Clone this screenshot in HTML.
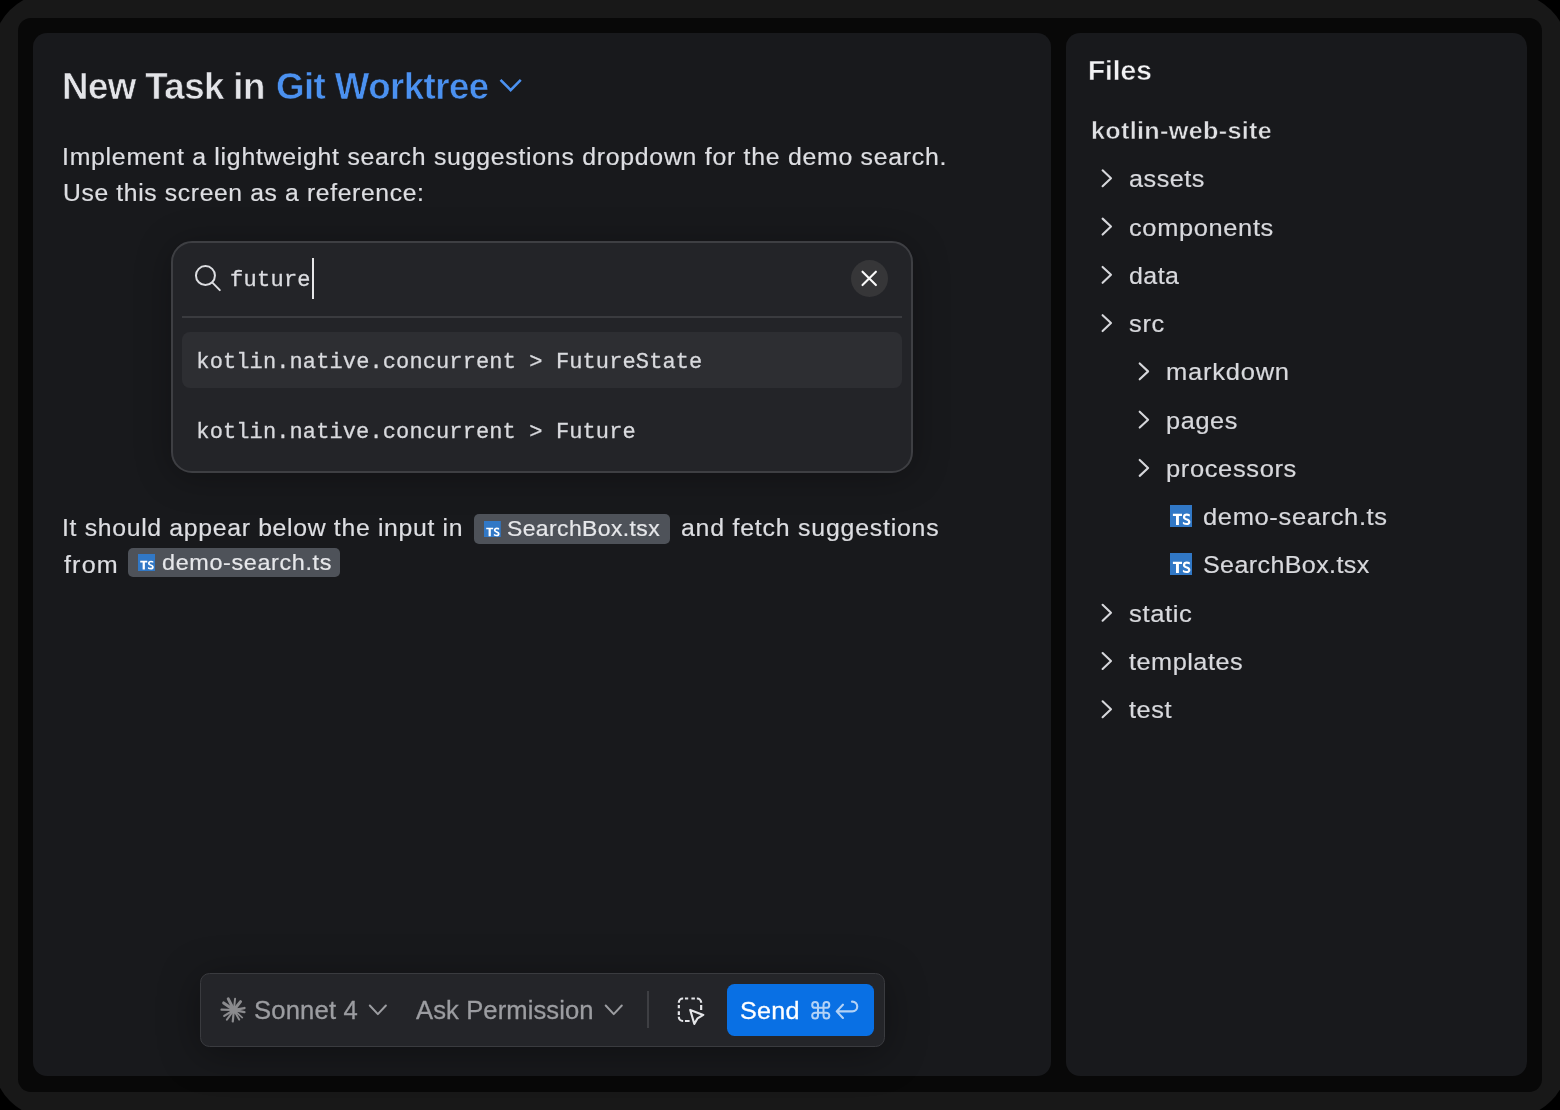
<!DOCTYPE html>
<html><head><meta charset="utf-8"><title>New Task</title>
<style>
html,body{margin:0;padding:0;background:#000;}
html{overflow:hidden;}
body{width:1560px;height:1110px;overflow:hidden;font-family:"Liberation Sans",sans-serif;}
#root{position:relative;width:1560px;height:1110px;overflow:hidden;background:#000;}
.a{position:absolute;display:block;}
#txt{position:absolute;left:0;top:0;width:1560px;height:1110px;will-change:transform;}
.t{position:absolute;display:block;white-space:pre;transform-origin:0 50%;}
.sans{font-family:"Liberation Sans",sans-serif;}
.mono{font-family:"Liberation Mono",monospace;}
#frame{left:-7.5px;top:-7.5px;width:1575px;height:1125px;background:#181818;border-radius:58px;}
#inner{left:17.8px;top:17.8px;width:1524.2px;height:1074px;background:#080808;border-radius:13px;}
#left{left:33.2px;top:32.9px;width:1017.9px;height:1043.4px;background:#18191c;border-radius:14px;}
#right{left:1065.9px;top:32.9px;width:460.8px;height:1043.4px;background:#18191c;border-radius:14px;}
#sbox{left:170.9px;top:240.9px;width:742.6px;height:231.8px;box-sizing:border-box;background:#232428;border:2px solid #3e3f43;border-radius:21px;box-shadow:0 4px 36px rgba(0,0,0,.3);}
#sdiv{left:181.8px;top:315.5px;width:720.6px;height:2px;background:#3a3b3f;}
#shl{left:182.2px;top:332px;width:720.2px;height:55.7px;background:#2d2e32;border-radius:8px;}
#cursor{left:312px;top:258px;width:2px;height:41px;background:#e6e6e8;}
#close{left:850.5px;top:259.7px;width:37.3px;height:37.3px;border-radius:50%;background:#363638;}
.chip{background:#4e5259;border-radius:5px;}
#tb{left:199.6px;top:972.5px;width:685.4px;height:74px;box-sizing:border-box;background:#242529;border:1.2px solid #3a3b3f;border-radius:9.5px;box-shadow:0 6px 40px rgba(0,0,0,.36);}
#tsep{left:647.3px;top:991px;width:1.5px;height:37px;background:#3e3f43;}
#send{left:727px;top:983.7px;width:147px;height:52.2px;background:#0970e4;border-radius:7.5px;}
</style></head><body><div id="root">
<div class="a" id="frame"></div>
<div class="a" id="inner"></div>
<div class="a" id="left"></div>
<div class="a" id="right"></div>
<div class="a" id="sbox"></div>
<div class="a" id="sdiv"></div>
<div class="a" id="shl"></div>
<div class="a" id="cursor"></div>
<div class="a" id="close"></div>
<div class="a chip" style="left:473.7px;top:513.8px;width:196.5px;height:30px"></div>
<div class="a chip" style="left:128.2px;top:547.7px;width:211.4px;height:29.2px"></div>
<div class="a" id="tb"></div>
<div class="a" id="tsep"></div>
<div class="a" id="send"></div>
<svg class="a" style="left:496px;top:75px" width="30" height="20" viewBox="496 75 30 20"><path d="M500.52 79.82 L510.65 90.06 L520.78 79.82" fill="none" stroke="#4b91f0" stroke-width="2.6" stroke-linecap="butt" stroke-linejoin="miter"/></svg>
<svg class="a" style="left:365px;top:1001px" width="26" height="18" viewBox="365 1001 26 18"><path d="M369.80 1005.50 L377.85 1014.10 L385.90 1005.50" fill="none" stroke="#9c9da1" stroke-width="2.0" stroke-linecap="round" stroke-linejoin="round"/></svg>
<svg class="a" style="left:601px;top:1001px" width="26" height="18" viewBox="601 1001 26 18"><path d="M605.70 1005.50 L613.75 1014.10 L621.80 1005.50" fill="none" stroke="#9c9da1" stroke-width="2.0" stroke-linecap="round" stroke-linejoin="round"/></svg>
<svg class="a" style="left:190px;top:261px" width="36" height="36" viewBox="190 261 36 36"><circle cx="205.45" cy="275.6" r="9.5" fill="none" stroke="#dcdde1" stroke-width="2"/><path d="M212.4 282.6 L219.8 290.1" stroke="#dcdde1" stroke-width="2" stroke-linecap="round"/></svg>
<svg class="a" style="left:850px;top:259px" width="38" height="38" viewBox="850 259 38 38"><path d="M862.5 271.65 L875.9 285.05 M875.9 271.65 L862.5 285.05" stroke="#fafafa" stroke-width="2.1" stroke-linecap="round"/></svg>
<svg class="a" style="left:484.00px;top:520.60px" width="16.80" height="16.80" viewBox="0 0 22 22"><rect width="22" height="22" fill="#3178c6"/><path d="M2.9 8.8 H12.0 V10.9 H8.9 V19.9 H6.0 V10.9 H2.9 Z" fill="#fff"/><path transform="translate(12.9 8.6) scale(0.987 1.106) translate(-11.9 -9.3)" d="M18.9 11.9 C18.0 11.4 17.0 11.2 16.0 11.2 C14.9 11.2 14.2 11.6 14.2 12.3 C14.2 13.0 14.9 13.3 16.2 13.8 C18.2 14.5 19.5 15.2 19.5 16.9 C19.5 18.7 18.0 19.7 15.7 19.7 C14.3 19.7 13.0 19.4 11.9 18.8 V16.6 C13.0 17.3 14.3 17.7 15.5 17.7 C16.6 17.7 17.2 17.4 17.2 16.8 C17.2 16.1 16.5 15.8 15.1 15.3 C13.0 14.6 11.9 13.9 11.9 12.3 C11.9 10.4 13.5 9.3 15.9 9.3 C17.0 9.3 18.0 9.5 18.9 9.9 Z" fill="#fff"/></svg>
<svg class="a" style="left:138.10px;top:553.90px" width="17.00" height="17.00" viewBox="0 0 22 22"><rect width="22" height="22" fill="#3178c6"/><path d="M2.9 8.8 H12.0 V10.9 H8.9 V19.9 H6.0 V10.9 H2.9 Z" fill="#fff"/><path transform="translate(12.9 8.6) scale(0.987 1.106) translate(-11.9 -9.3)" d="M18.9 11.9 C18.0 11.4 17.0 11.2 16.0 11.2 C14.9 11.2 14.2 11.6 14.2 12.3 C14.2 13.0 14.9 13.3 16.2 13.8 C18.2 14.5 19.5 15.2 19.5 16.9 C19.5 18.7 18.0 19.7 15.7 19.7 C14.3 19.7 13.0 19.4 11.9 18.8 V16.6 C13.0 17.3 14.3 17.7 15.5 17.7 C16.6 17.7 17.2 17.4 17.2 16.8 C17.2 16.1 16.5 15.8 15.1 15.3 C13.0 14.6 11.9 13.9 11.9 12.3 C11.9 10.4 13.5 9.3 15.9 9.3 C17.0 9.3 18.0 9.5 18.9 9.9 Z" fill="#fff"/></svg>
<svg class="a" style="left:1170.00px;top:505.04px" width="22.00" height="22.00" viewBox="0 0 22 22"><rect width="22" height="22" fill="#3178c6"/><path d="M2.9 8.8 H12.0 V10.9 H8.9 V19.9 H6.0 V10.9 H2.9 Z" fill="#fff"/><path transform="translate(12.9 8.6) scale(0.987 1.106) translate(-11.9 -9.3)" d="M18.9 11.9 C18.0 11.4 17.0 11.2 16.0 11.2 C14.9 11.2 14.2 11.6 14.2 12.3 C14.2 13.0 14.9 13.3 16.2 13.8 C18.2 14.5 19.5 15.2 19.5 16.9 C19.5 18.7 18.0 19.7 15.7 19.7 C14.3 19.7 13.0 19.4 11.9 18.8 V16.6 C13.0 17.3 14.3 17.7 15.5 17.7 C16.6 17.7 17.2 17.4 17.2 16.8 C17.2 16.1 16.5 15.8 15.1 15.3 C13.0 14.6 11.9 13.9 11.9 12.3 C11.9 10.4 13.5 9.3 15.9 9.3 C17.0 9.3 18.0 9.5 18.9 9.9 Z" fill="#fff"/></svg>
<svg class="a" style="left:1170.00px;top:553.31px" width="22.00" height="22.00" viewBox="0 0 22 22"><rect width="22" height="22" fill="#3178c6"/><path d="M2.9 8.8 H12.0 V10.9 H8.9 V19.9 H6.0 V10.9 H2.9 Z" fill="#fff"/><path transform="translate(12.9 8.6) scale(0.987 1.106) translate(-11.9 -9.3)" d="M18.9 11.9 C18.0 11.4 17.0 11.2 16.0 11.2 C14.9 11.2 14.2 11.6 14.2 12.3 C14.2 13.0 14.9 13.3 16.2 13.8 C18.2 14.5 19.5 15.2 19.5 16.9 C19.5 18.7 18.0 19.7 15.7 19.7 C14.3 19.7 13.0 19.4 11.9 18.8 V16.6 C13.0 17.3 14.3 17.7 15.5 17.7 C16.6 17.7 17.2 17.4 17.2 16.8 C17.2 16.1 16.5 15.8 15.1 15.3 C13.0 14.6 11.9 13.9 11.9 12.3 C11.9 10.4 13.5 9.3 15.9 9.3 C17.0 9.3 18.0 9.5 18.9 9.9 Z" fill="#fff"/></svg>
<svg class="a" style="left:215px;top:992px" width="38" height="36" viewBox="215 992 38 36"><path d="M233.9 1010.0 L228.27 998.91" stroke="#8b8b8e" stroke-width="3.0" stroke-linecap="round"/><path d="M233.9 1010.0 L235.06 998.74" stroke="#8b8b8e" stroke-width="2.0" stroke-linecap="round"/><path d="M233.9 1010.0 L240.54 1001.63" stroke="#8b8b8e" stroke-width="3.0" stroke-linecap="round"/><path d="M233.9 1010.0 L244.43 1008.06" stroke="#8b8b8e" stroke-width="2.4" stroke-linecap="round"/><path d="M233.9 1010.0 L244.43 1012.10" stroke="#8b8b8e" stroke-width="2.4" stroke-linecap="round"/><path d="M233.9 1010.0 L242.28 1017.54" stroke="#8b8b8e" stroke-width="1.7" stroke-linecap="round"/><path d="M233.9 1010.0 L239.19 1019.57" stroke="#8b8b8e" stroke-width="2.0" stroke-linecap="round"/><path d="M233.9 1010.0 L232.75 1021.52" stroke="#8b8b8e" stroke-width="2.2" stroke-linecap="round"/><path d="M233.9 1010.0 L226.92 1019.64" stroke="#8b8b8e" stroke-width="2.0" stroke-linecap="round"/><path d="M233.9 1010.0 L224.21 1015.92" stroke="#8b8b8e" stroke-width="2.2" stroke-linecap="round"/><path d="M233.9 1010.0 L221.49 1009.67" stroke="#8b8b8e" stroke-width="2.2" stroke-linecap="round"/><path d="M233.9 1010.0 L223.67 1002.92" stroke="#8b8b8e" stroke-width="3.0" stroke-linecap="round"/><circle cx="233.9" cy="1010.0" r="3.7" fill="#8b8b8e"/></svg>
<svg class="a" style="left:674px;top:994px" width="36" height="36" viewBox="674 994 36 36"><path d="M678.85 1002.8 V1002.5 A4.0 4.0 0 0 1 682.85 998.5 H683.15 M696.85 998.5 H697.15 A4.0 4.0 0 0 1 701.15 1002.5 V1002.8 M678.85 1016.7 V1017.0 A4.0 4.0 0 0 0 682.85 1021.0 H683.15 M684.95 998.5 H688.2 M691.4 998.5 H694.9 M678.85 1005.1 V1008.2 M678.85 1011.3 V1014.9 M701.15 1005.1 V1010.0 M684.95 1021 H689.6" fill="none" stroke="#e4e5e8" stroke-width="2.2"/><path d="M690.2 1009.9 L703.3 1014.9 L697.6 1018.3 L694.3 1023.9 Z" fill="none" stroke="#e4e5e8" stroke-width="2.1" stroke-linejoin="round"/></svg>
<svg class="a" style="left:808px;top:997px" width="26" height="26" viewBox="808 997 26 26"><path d="M818.0 1007.8 H823.5 V1012.7 H818.0 Z M818.0 1007.8 H815.1 A2.9 2.9 0 1 1 818.0 1004.9 Z M823.5 1007.8 V1004.9 A2.9 2.9 0 1 1 826.4 1007.8 Z M823.5 1012.7 H826.4 A2.9 2.9 0 1 1 823.5 1015.6 Z M818.0 1012.7 V1015.6 A2.9 2.9 0 1 1 815.1 1012.7 Z" fill="none" stroke="#b3d2f6" stroke-width="2.0" stroke-linejoin="round"/></svg>
<svg class="a" style="left:832px;top:996px" width="30" height="28" viewBox="832 996 30 28"><path d="M837.0 1011.35 H852.4 A4.85 4.85 0 0 0 852.4 1001.65 H852.0 M842.9 1004.7 L836.7 1011.35 L842.9 1018.0" fill="none" stroke="#b3d2f6" stroke-width="2.1" stroke-linecap="round" stroke-linejoin="round"/></svg>
<svg class="a" style="left:1098px;top:166px" width="18" height="26" viewBox="1098 166 18 26"><path d="M1102.60 170.35 L1111.00 178.30 L1102.60 186.25" fill="none" stroke="#d6d7db" stroke-width="2.1" stroke-linecap="round" stroke-linejoin="round"/></svg>
<svg class="a" style="left:1098px;top:214px" width="18" height="26" viewBox="1098 214 18 26"><path d="M1102.60 218.62 L1111.00 226.57 L1102.60 234.52" fill="none" stroke="#d6d7db" stroke-width="2.1" stroke-linecap="round" stroke-linejoin="round"/></svg>
<svg class="a" style="left:1098px;top:262px" width="18" height="26" viewBox="1098 262 18 26"><path d="M1102.60 266.89 L1111.00 274.84 L1102.60 282.79" fill="none" stroke="#d6d7db" stroke-width="2.1" stroke-linecap="round" stroke-linejoin="round"/></svg>
<svg class="a" style="left:1098px;top:311px" width="18" height="26" viewBox="1098 311 18 26"><path d="M1102.60 315.16 L1111.00 323.11 L1102.60 331.06" fill="none" stroke="#d6d7db" stroke-width="2.1" stroke-linecap="round" stroke-linejoin="round"/></svg>
<svg class="a" style="left:1135px;top:359px" width="18" height="26" viewBox="1135 359 18 26"><path d="M1139.70 363.43 L1148.10 371.38 L1139.70 379.33" fill="none" stroke="#d6d7db" stroke-width="2.1" stroke-linecap="round" stroke-linejoin="round"/></svg>
<svg class="a" style="left:1135px;top:407px" width="18" height="26" viewBox="1135 407 18 26"><path d="M1139.70 411.70 L1148.10 419.65 L1139.70 427.60" fill="none" stroke="#d6d7db" stroke-width="2.1" stroke-linecap="round" stroke-linejoin="round"/></svg>
<svg class="a" style="left:1135px;top:455px" width="18" height="26" viewBox="1135 455 18 26"><path d="M1139.70 459.97 L1148.10 467.92 L1139.70 475.87" fill="none" stroke="#d6d7db" stroke-width="2.1" stroke-linecap="round" stroke-linejoin="round"/></svg>
<svg class="a" style="left:1098px;top:600px" width="18" height="26" viewBox="1098 600 18 26"><path d="M1102.60 604.78 L1111.00 612.73 L1102.60 620.68" fill="none" stroke="#d6d7db" stroke-width="2.1" stroke-linecap="round" stroke-linejoin="round"/></svg>
<svg class="a" style="left:1098px;top:649px" width="18" height="26" viewBox="1098 649 18 26"><path d="M1102.60 653.05 L1111.00 661.00 L1102.60 668.95" fill="none" stroke="#d6d7db" stroke-width="2.1" stroke-linecap="round" stroke-linejoin="round"/></svg>
<svg class="a" style="left:1098px;top:697px" width="18" height="26" viewBox="1098 697 18 26"><path d="M1102.60 701.32 L1111.00 709.27 L1102.60 717.22" fill="none" stroke="#d6d7db" stroke-width="2.1" stroke-linecap="round" stroke-linejoin="round"/></svg>
<div id="txt">
<span class="t sans" id="t1" style="left:62.32px;top:67.89px;font-weight:700;font-size:37.7px;line-height:37.7px;color:#e3e4e8;letter-spacing:-0.594px;transform:scaleX(0.9725);-webkit-text-stroke:0.6px #18191c;">New Task in</span>
<span class="t sans" id="t2" style="left:275.53px;top:67.89px;font-weight:700;font-size:37.7px;line-height:37.7px;color:#4b91f0;letter-spacing:-0.574px;transform:scaleX(0.9725);-webkit-text-stroke:0.6px #18191c;">Git Worktree</span>
<span class="t sans" id="b1" style="left:62.46px;top:145.58px;font-weight:400;font-size:23.3px;line-height:23.3px;color:#dddee2;letter-spacing:0.682px;transform:scaleX(1.0665);-webkit-text-stroke:0.2px #dddee2;">Implement a lightweight search suggestions dropdown for the demo search.</span>
<span class="t sans" id="b2" style="left:62.85px;top:182.28px;font-weight:400;font-size:23.3px;line-height:23.3px;color:#dddee2;letter-spacing:0.601px;transform:scaleX(1.0600);-webkit-text-stroke:0.2px #dddee2;">Use this screen as a reference:</span>
<span class="t sans" id="b3" style="left:62.47px;top:517.28px;font-weight:400;font-size:23.3px;line-height:23.3px;color:#dddee2;letter-spacing:0.628px;transform:scaleX(1.0647);-webkit-text-stroke:0.2px #dddee2;">It should appear below the input in</span>
<span class="t sans" id="c1" style="left:507.37px;top:518.21px;font-weight:400;font-size:22.2px;line-height:22.2px;color:#e6e7ea;letter-spacing:0.387px;transform:scaleX(1.0338);-webkit-text-stroke:0.2px #e6e7ea;">SearchBox.tsx</span>
<span class="t sans" id="b4" style="left:681.40px;top:517.28px;font-weight:400;font-size:23.3px;line-height:23.3px;color:#dddee2;letter-spacing:0.722px;transform:scaleX(1.0686);-webkit-text-stroke:0.2px #dddee2;">and fetch suggestions</span>
<span class="t sans" id="b5" style="left:63.85px;top:553.88px;font-weight:400;font-size:23.3px;line-height:23.3px;color:#dddee2;letter-spacing:1.068px;transform:scaleX(1.0769);-webkit-text-stroke:0.2px #dddee2;">from</span>
<span class="t sans" id="c2" style="left:161.66px;top:551.51px;font-weight:400;font-size:22.2px;line-height:22.2px;color:#e6e7ea;letter-spacing:0.597px;transform:scaleX(1.0541);-webkit-text-stroke:0.2px #e6e7ea;">demo-search.ts</span>
<span class="t sans" id="s1" style="left:253.50px;top:998.15px;font-weight:400;font-size:25.4px;line-height:25.4px;color:#9c9da1;letter-spacing:0.143px;transform:scaleX(1.0101);-webkit-text-stroke:0.3px #9c9da1;">Sonnet 4</span>
<span class="t sans" id="s2" style="left:416.35px;top:998.15px;font-weight:400;font-size:25.4px;line-height:25.4px;color:#9c9da1;letter-spacing:0.100px;transform:scaleX(1.0076);-webkit-text-stroke:0.3px #9c9da1;">Ask Permission</span>
<span class="t sans" id="s3" style="left:740.22px;top:998.56px;font-weight:400;font-size:24.8px;line-height:24.8px;color:#ffffff;letter-spacing:0.249px;transform:scaleX(1.0137);-webkit-text-stroke:0.3px #ffffff;">Send</span>
<span class="t sans" id="f0" style="left:1087.65px;top:56.45px;font-weight:700;font-size:28.2px;line-height:28.2px;color:#f2f2f4;letter-spacing:-0.058px;transform:scaleX(0.9963);-webkit-text-stroke:0.45px #18191c;">Files</span>
<span class="t sans" id="f1" style="left:1090.71px;top:118.71px;font-weight:700;font-size:24.5px;line-height:24.5px;color:#dfe0e3;letter-spacing:0.318px;transform:scaleX(1.0270);-webkit-text-stroke:0.5px #18191c;">kotlin-web-site</span>
<span class="t mono" id="m0" style="left:230.12px;top:270.29px;font-weight:400;font-size:22px;line-height:22px;color:#dcdde1;letter-spacing:0.250px;-webkit-text-stroke:0.3px #dcdde1;">future</span>
<span class="t mono" id="m1" style="left:196.32px;top:351.99px;font-weight:400;font-size:22px;line-height:22px;color:#d9dade;letter-spacing:0.116px;-webkit-text-stroke:0.3px #d9dade;">kotlin.native.concurrent &gt; FutureState</span>
<span class="t mono" id="m2" style="left:196.32px;top:422.39px;font-weight:400;font-size:22px;line-height:22px;color:#d9dade;letter-spacing:0.115px;-webkit-text-stroke:0.3px #d9dade;">kotlin.native.concurrent &gt; Future</span>
<span class="t sans" id="r0" style="left:1128.79px;top:167.23px;font-weight:400;font-size:24.3px;line-height:24.3px;color:#d8d9dd;letter-spacing:0.500px;transform:scaleX(1.0380);-webkit-text-stroke:0.2px #d8d9dd;">assets</span>
<span class="t sans" id="r1" style="left:1128.78px;top:215.50px;font-weight:400;font-size:24.3px;line-height:24.3px;color:#d8d9dd;letter-spacing:0.629px;transform:scaleX(1.0454);-webkit-text-stroke:0.2px #d8d9dd;">components</span>
<span class="t sans" id="r2" style="left:1128.80px;top:263.77px;font-weight:400;font-size:24.3px;line-height:24.3px;color:#d8d9dd;letter-spacing:0.419px;transform:scaleX(1.0278);-webkit-text-stroke:0.2px #d8d9dd;">data</span>
<span class="t sans" id="r3" style="left:1129.16px;top:312.04px;font-weight:400;font-size:24.3px;line-height:24.3px;color:#d8d9dd;letter-spacing:0.675px;transform:scaleX(1.0453);-webkit-text-stroke:0.2px #d8d9dd;">src</span>
<span class="t sans" id="r4" style="left:1165.74px;top:360.31px;font-weight:400;font-size:24.3px;line-height:24.3px;color:#d8d9dd;letter-spacing:0.733px;transform:scaleX(1.0494);-webkit-text-stroke:0.2px #d8d9dd;">markdown</span>
<span class="t sans" id="r5" style="left:1165.88px;top:408.58px;font-weight:400;font-size:24.3px;line-height:24.3px;color:#d8d9dd;letter-spacing:0.613px;transform:scaleX(1.0399);-webkit-text-stroke:0.2px #d8d9dd;">pages</span>
<span class="t sans" id="r6" style="left:1165.87px;top:456.85px;font-weight:400;font-size:24.3px;line-height:24.3px;color:#d8d9dd;letter-spacing:0.602px;transform:scaleX(1.0488);-webkit-text-stroke:0.2px #d8d9dd;">processors</span>
<span class="t sans" id="r7" style="left:1203.28px;top:505.12px;font-weight:400;font-size:24.3px;line-height:24.3px;color:#d8d9dd;letter-spacing:0.606px;transform:scaleX(1.0500);-webkit-text-stroke:0.2px #d8d9dd;">demo-search.ts</span>
<span class="t sans" id="r8" style="left:1203.17px;top:553.39px;font-weight:400;font-size:24.3px;line-height:24.3px;color:#d8d9dd;letter-spacing:0.387px;transform:scaleX(1.0308);-webkit-text-stroke:0.2px #d8d9dd;">SearchBox.tsx</span>
<span class="t sans" id="r9" style="left:1129.16px;top:601.66px;font-weight:400;font-size:24.3px;line-height:24.3px;color:#d8d9dd;letter-spacing:0.578px;transform:scaleX(1.0549);-webkit-text-stroke:0.2px #d8d9dd;">static</span>
<span class="t sans" id="r10" style="left:1129.42px;top:649.93px;font-weight:400;font-size:24.3px;line-height:24.3px;color:#d8d9dd;letter-spacing:0.497px;transform:scaleX(1.0397);-webkit-text-stroke:0.2px #d8d9dd;">templates</span>
<span class="t sans" id="r11" style="left:1129.42px;top:698.20px;font-weight:400;font-size:24.3px;line-height:24.3px;color:#d8d9dd;letter-spacing:0.538px;transform:scaleX(1.0435);-webkit-text-stroke:0.2px #d8d9dd;">test</span>
</div>
</div></body></html>
